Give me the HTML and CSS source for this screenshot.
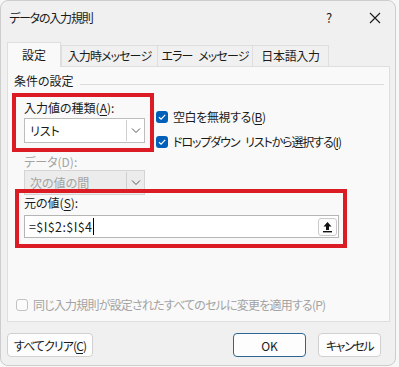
FILE: index.html
```html
<!DOCTYPE html>
<html lang="ja">

<head>
    <meta charset="UTF-8">
    <meta name="viewport" content="width=device-width, initial-scale=1.0">
    <title>データの入力規則</title>
    <link rel="stylesheet" href="styles.css">
</head>

<body>
    <div class="dialog">
        <div class="titlebar">
            <span class="title">データの入力規則</span>
            <span class="help">?</span>
            <svg class="close" width="12" height="12" viewBox="0 0 12 12">
                <path d="M1 1L11 11M11 1L1 11" stroke="#1a1a1a" stroke-width="1.1" fill="none" />
            </svg>
        </div>

        <div class="tabs">
            <div class="tab active">設定</div>
            <div class="tab t2">入力時メッセージ</div>
            <div class="tab t3">エラー メッセージ</div>
            <div class="tab t4">日本語入力</div>
        </div>

        <div class="panel">
            <div class="group-title"><span>条件の設定</span></div>

            <div class="fields">
                <div class="top-row">
                    <div class="col">
                        <div class="lbl">入力値の種類(<u>A</u>):</div>
                        <div class="select">
                            <span class="value">リスト</span>
                            <span class="drop">
                                <svg width="10" height="6" viewBox="0 0 10 6">
                                    <path d="M1 0.5L5 4.5L9 0.5" stroke="#555" stroke-width="1" fill="none" />
                                </svg>
                            </span>
                        </div>
                        <div class="lbl dim">データ(D):</div>
                        <div class="select disabled">
                            <span class="value">次の値の間</span>
                            <span class="drop">
                                <svg width="10" height="6" viewBox="0 0 10 6">
                                    <path d="M1 0.5L5 4.5L9 0.5" stroke="#555" stroke-width="1" fill="none" />
                                </svg>
                            </span>
                        </div>
                    </div>

                    <div class="checks">
                        <div class="check">
                            <span class="box on">
                                <svg width="12" height="12" viewBox="0 0 12 12">
                                    <path d="M3 6.2L5.1 8.2L9.2 3.9" stroke="#fff" stroke-width="1.2" fill="none" />
                                </svg>
                            </span>
                            <span class="c1">空白を無視する(<u>B</u>)</span>
                        </div>
                        <div class="check">
                            <span class="box on">
                                <svg width="12" height="12" viewBox="0 0 12 12">
                                    <path d="M3 6.2L5.1 8.2L9.2 3.9" stroke="#fff" stroke-width="1.2" fill="none" />
                                </svg>
                            </span>
                            <span class="c2">ドロップダウン リストから選択する(<u>I</u>)</span>
                        </div>
                    </div>
                </div>

                <div class="lbl">元の値(<u>S</u>):</div>
                <div class="input">
                    <span class="formula">=$I$2:$I$4</span><span class="caret"></span>
                    <span class="pick">
                        <svg width="11" height="12" viewBox="0 0 11 12">
                            <path d="M5.5 1L1.5 5.5H4V9H7V5.5H9.5Z" fill="#111" />
                            <rect x="1" y="10" width="9" height="1.4" fill="#111" />
                        </svg>
                    </span>
                </div>
            </div>

            <div class="check apply">
                <span class="box off"></span>
                <span>同じ入力規則が設定されたすべてのセルに変更を適用する(P)</span>
            </div>

            <!-- red annotation frames -->
            <div class="mark mark-type"></div>
            <div class="mark mark-source"></div>
        </div>

        <div class="buttons">
            <button class="btn clear">すべてクリア(<u>C</u>)</button>
            <button class="btn ok">OK</button>
            <button class="btn cancel">キャンセル</button>
        </div>
    </div>
</body>

</html>
```

FILE: styles.css
```css
:root {
    --bg: #f0f0f0;
    --panel: #f9f9f9;
    --border: #dedede;
    --text: #1a1a1a;
    --text-dim: #a3a3a3;
    --accent: #005fb8;
    --mark: #dc1c24;
}

* {
    box-sizing: border-box;
    margin: 0;
    padding: 0;
}

body {
    background: #f7f7f7;
    font-family: "Noto Sans CJK JP", "Noto Sans", sans-serif;
    font-size: 12px;
    font-feature-settings: "palt";
    color: var(--text);
}

u {
    text-decoration-thickness: 1px;
    text-underline-offset: 2px;
}

.dialog {
    width: 396px;
    height: 366px;
    background: var(--bg);
    border: 1px solid #cdcdcd;
    border-radius: 8px;
    overflow: hidden;
}

.titlebar {
    height: 33px;
    display: flex;
    align-items: center;
    padding-left: 8px;
}

.title {
    flex: 1;
    font-size: 12px;
    line-height: 16px;
    padding-top: 1px;
    letter-spacing: -1.2px;
}

.help {
    width: 12px;
    text-align: center;
    font-size: 13px;
    margin-right: 34px;
}

.close {
    margin-right: 14px;
}

.tabs {
    display: flex;
    align-items: flex-end;
    height: 24px;
    margin-top: 8px;
    padding-left: 6px;
}

.tab {
    height: 21px;
    line-height: 20px;
    text-align: center;
    white-space: nowrap;
    background: var(--bg);
    border: 1px solid var(--border);
    border-bottom: none;
    font-size: 12px;
    letter-spacing: -0.9px;
}

.tab.active {
    width: 54px;
    height: 25px;
    line-height: 24px;
    margin-bottom: -1px;
    position: relative;
    z-index: 1;
    background: var(--panel);
    letter-spacing: 0;
}

.tab.t2 {
    width: 97px;
}

.tab.t3 {
    width: 95px;
    border-left: none;
    word-spacing: 4px;
}

.tab.t4 {
    width: 76px;
    border-left: none;
    letter-spacing: -0.3px;
}

.panel {
    position: relative;
    width: 383px;
    height: 256px;
    margin-left: 6px;
    background: var(--panel);
    border: 1px solid var(--border);
}

.group-title {
    display: flex;
    align-items: flex-start;
    margin-top: 6px;
    padding-left: 6px;
    line-height: 16px;
}

.group-title::after {
    content: "";
    flex: 1;
    height: 1px;
    background: #dcdcdc;
    margin: 11px 5px 0 6px;
}

.fields {
    padding-left: 16px;
}

.top-row {
    display: flex;
    gap: 11px;
}

.col {
    width: 121px;
}

.lbl {
    line-height: 16px;
    margin-top: 11px;
}

.lbl.dim {
    color: var(--text-dim);
}

.select {
    display: flex;
    height: 25px;
    margin-top: 2px;
    background: #fff;
    border: 1px solid #bdbdbd;
}

.select .value {
    flex: 1;
    line-height: 23px;
    padding-left: 5px;
}

.select .drop {
    width: 18px;
    display: flex;
    align-items: center;
    justify-content: center;
    border-left: 1px solid #cfcfcf;
    margin: 1px 0;
    padding-top: 1px;
}

.select.disabled {
    margin-top: 0;
    background: #ececec;
    border-color: #d4d4d4;
    color: var(--text-dim);
}

.checks {
    display: flex;
    flex-direction: column;
    gap: 9px;
    margin-top: 20px;
}

.check {
    display: flex;
    align-items: center;
    gap: 5px;
    line-height: 16px;
    white-space: nowrap;
}

.c1 {
    letter-spacing: -0.4px;
}

.c2 {
    letter-spacing: -1.1px;
    word-spacing: 4px;
}

.box {
    width: 12px;
    height: 12px;
    border-radius: 3px;
    flex-shrink: 0;
}

.box.on {
    background: var(--accent);
}

.box.on svg {
    display: block;
}

.box.off {
    border: 1px solid #c2c2c2;
    background: #fbfbfb;
}

.fields > .lbl {
    margin-top: 0;
}

.input {
    position: relative;
    display: flex;
    align-items: center;
    width: 315px;
    height: 23px;
    margin-top: 4px;
    background: #fff;
    border: 1px solid #b5b5b5;
    padding-left: 4px;
}

.formula {
    font-size: 12.5px;
    letter-spacing: 0.4px;
}

.caret {
    width: 1px;
    height: 17px;
    background: #000;
    margin-left: 1px;
}

.pick {
    position: absolute;
    right: 1px;
    top: 2px;
    width: 19px;
    height: 18px;
    display: flex;
    align-items: center;
    justify-content: center;
    border: 1px solid #cacaca;
    border-radius: 3px;
    background: #fdfdfd;
}

.apply {
    margin-top: 59px;
    padding-left: 8px;
    color: var(--text-dim);
    letter-spacing: -0.8px;
}

.mark {
    position: absolute;
    border: 4px solid var(--mark);
}

.mark-type {
    left: 4px;
    top: 26px;
    width: 142px;
    height: 59px;
}

.mark-source {
    left: 7px;
    top: 122px;
    width: 332px;
    height: 59px;
}

.buttons {
    display: flex;
    gap: 12px;
    margin-top: 11px;
    padding: 0 14px 0 6px;
}

.btn {
    height: 24px;
    padding: 0;
    white-space: nowrap;
    font-family: inherit;
    font-size: 12px;
    font-feature-settings: "palt";
    color: var(--text);
    background: #fdfdfd;
    border: 1px solid #d0d0d0;
    border-radius: 4px;
}

.btn.clear {
    width: 86px;
    letter-spacing: -0.9px;
}

.btn.ok {
    width: 73px;
    margin-left: auto;
    border-color: #2a6690;
}

.btn.cancel {
    width: 63px;
    letter-spacing: -1.4px;
}
```
